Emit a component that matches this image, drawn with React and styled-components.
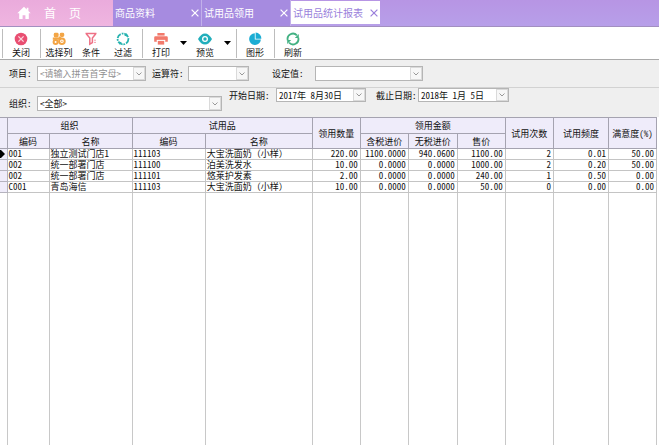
import React from "react";
import styled, { createGlobalStyle, css } from "styled-components";

const Global = createGlobalStyle`
  *, *::before, *::after { box-sizing: border-box; }
  body { margin: 0; background: #fff; }
  body, button, input, select {
    font-family: "Noto Sans CJK SC", "Liberation Sans", sans-serif;
    font-size: 9px;
    line-height: 11px;
    font-feature-settings: "hwid";
    color: #111;
  }
`;

const Page = styled.div`
  display: flex;
  flex-direction: column;
  min-height: 100vh;
  padding-right: 1px;
  overflow: hidden;
`;

/* ---------- tab strip ---------- */
const TabStrip = styled.nav`
  display: flex;
  height: 27px;
  background: linear-gradient(#b795e4, #b79fe9);
  border-bottom: 1px solid #a28fc0;
`;

const HomeTab = styled.button`
  display: flex;
  align-items: center;
  width: 113px;
  padding: 0 0 1px 17px;
  gap: 13px;
  border: 0;
  background: linear-gradient(#eaabdc, #efb5e0);
  color: #fff;
  font-size: 12px;
`;

const HomeLabel = styled.span`
  display: flex;
  gap: 13px;
`;

const Tab = styled.div`
  display: flex;
  align-items: center;
  justify-content: space-between;
  width: 89px;
  padding: 0 2px 1px;
  background: #a68be0;
  border-right: 1px solid #c2b0ea;
  color: #fff;
  ${(p) =>
    p.$active &&
    css`
      margin: 1px 0 2px;
      padding-bottom: 0;
      background: #fff;
      border-right: 0;
      color: #9a7fdb;
    `}
`;

const TabLabel = styled.button`
  padding: 0;
  border: 0;
  background: none;
  color: inherit;
  font-size: 10px;
  white-space: nowrap;
`;

const TabClose = styled.button`
  display: flex;
  padding: 0;
  border: 0;
  background: none;
  color: inherit;
`;

/* ---------- toolbar ---------- */
const Toolbar = styled.div`
  display: flex;
  align-items: center;
  height: 33px;
  border-bottom: 1px solid #a9a9a9;
  background: #fff;
`;

const Separator = styled.span`
  width: 1px;
  height: 29px;
  margin: 0 2px 0 3px;
  background: #bdbdbd;
  &:first-child { margin-left: 2px; }
`;

const ToolButton = styled.button`
  display: flex;
  flex-direction: column;
  align-items: center;
  gap: 1px;
  width: 32px;
  padding: 3px 0 0;
  border: 0;
  background: none;
  white-space: nowrap;
`;

const MenuButton = styled.button`
  display: flex;
  justify-content: center;
  width: 12px;
  padding: 0;
  border: 0;
  background: none;
`;

/* ---------- filters ---------- */
const FilterRow = styled.div`
  display: flex;
  align-items: flex-start;
  height: ${(p) => (p.$flush ? "29px" : "28px")};
  padding: ${(p) => (p.$flush ? "0" : "6px")} 0 0 9px;
  background: #efefef;
  border-bottom: ${(p) => (p.$flush ? "0" : "1px solid #d2d2d2")};
`;

const Field = styled.div`
  display: flex;
  align-items: center;
  margin-right: ${(p) => p.$after || "0"};
  margin-top: ${(p) => (p.$lowered ? "8px" : "0")};
`;

const Label = styled.label`
  width: ${(p) => p.$width};
  white-space: nowrap;
`;

const Box = styled.div`
  display: flex;
  position: relative;
  width: ${(p) => p.$width};
  height: ${(p) => p.$height || "15px"};
  border: 1px solid #b5b5b5;
  background: #fff;
`;

const controlText = css`
  flex: 1;
  min-width: 0;
  width: 100%;
  padding: 0 13px 0 2px;
  border: 0;
  border-radius: 0;
  outline: 0;
  background: transparent;
  appearance: none;
`;

const Select = styled.select`
  ${controlText}
  color: ${(p) => (p.$muted ? "#8f8f8f" : "#111")};
`;

const DateInput = styled.input`
  ${controlText}
`;

const Drop = styled.span`
  position: absolute;
  right: 0;
  top: 0;
  bottom: 0;
  width: 12px;
  display: flex;
  align-items: center;
  justify-content: center;
  border: 1px solid #dadada;
  background: #f7f7f7;
  pointer-events: none;
`;

/* ---------- report table ---------- */
const Report = styled.table`
  width: calc(100% - 2px);
  table-layout: fixed;
  border-collapse: collapse;
  border-top: 1px solid #a5a5ad;
`;

const HeadCell = styled.th`
  height: ${(p) => (p.$lower ? "15px" : "16px")};
  padding: 0;
  border: 1px solid #a5a3b0;
  background: #efecfa;
  font-weight: 400;
  white-space: nowrap;
`;

const Corner = styled(HeadCell)`
  border-left: 0;
`;

const Marker = styled.td`
  height: 11px;
  padding: 0;
  border: 1px solid #b5b3be;
  border-left: 0;
  background: #efecfa;
  line-height: 0;
`;

const Cell = styled.td`
  height: 11px;
  padding: 0 2px 0 1px;
  border: 1px solid #c4c4c4;
  line-height: 10px;
  text-align: ${(p) => (p.$num ? "right" : "left")};
  font-feature-settings: ${(p) => (p.$fullWidth ? "normal" : '"hwid"')};
  white-space: nowrap;
`;

const Blank = styled.td`
  height: calc(100vh - 192px);
  padding: 0;
  border: 1px solid #c8c8c8;
  border-bottom: 0;
  &:first-child { border-left: 0; }
`;

/* ---------- icons ---------- */
const Icon = ({ children, size = 14 }) => (
  <svg width={size} height={size} viewBox="0 0 14 14" fill="none" aria-hidden="true">
    {children}
  </svg>
);

const CloseIcon = () => (
  <Icon>
    <circle cx="7" cy="7" r="6.3" fill="#e94f72" />
    <path d="M4.4 4.4l5.2 5.2M9.6 4.4L4.4 9.6" stroke="#fbd5dd" strokeWidth="1.3" />
  </Icon>
);

const ColumnsIcon = () => (
  <Icon>
    <rect x="1.8" y=".8" width="4.8" height="4.6" rx="1.4" fill="#f3a545" />
    <rect x="7.8" y=".8" width="4.4" height="4.2" rx="1.4" fill="#f3a545" />
    <path d="M.8 6.6h7.4M7 5l2.4 2" stroke="#f3a545" strokeWidth="2.2" />
    <circle cx="3.6" cy="9.9" r="2" stroke="#f3a545" strokeWidth="2" />
    <circle cx="9.9" cy="9.3" r="2.8" stroke="#f3a545" strokeWidth="2" />
    <circle cx="9.9" cy="9.3" r=".8" fill="#f3a545" />
  </Icon>
);

const FunnelIcon = () => (
  <Icon>
    <path d="M1.5 1.6h11M2.4 2l3.4 4v6.2l2.6-1.6V6L11.6 2" stroke="#ee7186" strokeWidth="1.5" />
    <path d="M10 8.2h2M10 10.4h2" stroke="#f3a0ae" />
  </Icon>
);

const CycleIcon = () => (
  <Icon>
    <circle cx="7" cy="7" r="5.4" stroke="#28b3b0" strokeWidth="1.8" strokeDasharray="5 1.1 1.8 .8" />
    <path d="M10.6 1.2l.8 3.4-3.2-.8zM3.4 12.8l-.8-3.4 3.2.8z" fill="#28b3b0" />
  </Icon>
);

const PrintIcon = () => (
  <Icon>
    <path d="M3.4 1h7.2v2.6H3.4z" fill="#f27a6c" />
    <path d="M1.4 4.2h11.2q1.2 0 1.2 1.2v4.4h-2.6V8H2.8v1.8H.2V5.4q0-1.2 1.2-1.2z" fill="#f27a6c" />
    <path d="M3.8 8.8h6.4v3.8H3.8z" fill="#f27a6c" />
    <path d="M2.8 8.3h8.4" stroke="#fff" strokeWidth=".7" />
  </Icon>
);

const EyeIcon = () => (
  <Icon>
    <path d="M0 7Q3 1.4 7 1.4T14 7q-3 5.6-7 5.6T0 7z" fill="#21aebb" />
    <circle cx="7" cy="7" r="3" fill="#fff" />
    <circle cx="7" cy="7" r="1.7" fill="#21aebb" />
  </Icon>
);

const PieIcon = () => (
  <Icon>
    <path d="M6.8 1.2A5.9 5.9 0 1 0 12.9 7.6H6.8z" fill="#1badd4" />
    <path d="M7.6 .6A6 6 0 0 1 13.4 6.8H7.6z" fill="#1badd4" />
  </Icon>
);

const RefreshIcon = () => (
  <Icon>
    <path d="M1.7 8.2A5.4 5.4 0 0 1 10.9 3.3M12.3 5.8A5.4 5.4 0 0 1 3.1 10.7" stroke="#43b183" strokeWidth="1.8" />
    <path d="M12.8 2v4H8.8zM1.2 12V8h4z" fill="#43b183" />
  </Icon>
);

const HomeIcon = () => (
  <Icon>
    <path d="M7 .8L.3 7.2h1.9v5.9h3.4V9.2h2.8v3.9h3.4V7.2h1.9L11.4 5V1.8H9.7v1.6z" fill="#fff" />
  </Icon>
);

const CrossIcon = () => (
  <svg width="8" height="8" viewBox="0 0 8 8" aria-hidden="true">
    <path d="M.6.6l6.8 6.8M7.4.6L.6 7.4" stroke="currentColor" strokeWidth="1.2" />
  </svg>
);

const Triangle = () => (
  <svg width="7" height="4" viewBox="0 0 7 4" aria-hidden="true">
    <path d="M0 0h7L3.5 4z" fill="#000" />
  </svg>
);

const Chevron = () => (
  <Drop>
    <svg width="6" height="4" viewBox="0 0 6 4" fill="none" aria-hidden="true">
      <path d="M.5.5L3 3 5.5.5" stroke="#999" />
    </svg>
  </Drop>
);

const RowPointer = () => (
  <svg width="5" height="8" viewBox="0 0 5 8" aria-label="当前行">
    <path d="M0 0h1l4 4-4 4H0z" fill="#000" />
  </svg>
);

/* ---------- composed parts ---------- */
const Tool = ({ icon: Glyph, children }) => (
  <ToolButton type="button">
    <Glyph />
    <span>{children}</span>
  </ToolButton>
);

const Menu = ({ label }) => (
  <MenuButton type="button" aria-label={label}>
    <Triangle />
  </MenuButton>
);

const SelectField = ({ id, label, labelWidth, width, value = "", muted, after, lowered }) => (
  <Field $after={after} $lowered={lowered}>
    <Label htmlFor={id} $width={labelWidth}>{label}</Label>
    <Box $width={width}>
      <Select id={id} $muted={muted} defaultValue={value}>
        <option value={value}>{value}</option>
      </Select>
      <Chevron />
    </Box>
  </Field>
);

const DateField = ({ id, label, labelWidth, width, value, after }) => (
  <Field $after={after}>
    <Label htmlFor={id} $width={labelWidth}>{label}</Label>
    <Box $width={width} $height="14px">
      <DateInput id={id} type="text" defaultValue={value} />
      <Chevron />
    </Box>
  </Field>
);

const tabs = ["商品资料", "试用品领用", "试用品统计报表"];
const columns = [7, 42, 83, 73, 107, 48, 48, 49, 48, 48, 55, 48];
const rows = [
  ["001", "独立测试门店1", "111103", "大宝洗面奶（小样）", "220.00", "1100.0000", "940.0600", "1100.00", "2", "0.01", "50.00"],
  ["002", "统一部署门店", "111100", "泊美洗发水", "10.00", "0.0000", "0.0000", "1000.00", "2", "0.20", "50.00"],
  ["002", "统一部署门店", "111101", "悠莱护发素", "2.00", "0.0000", "0.0000", "240.00", "1", "0.50", "0.00"],
  ["C001", "青岛海信", "111103", "大宝洗面奶（小样）", "10.00", "0.0000", "0.0000", "50.00", "0", "0.00", "0.00"],
];

const Col = styled.col`
  width: ${(p) => p.$w}px;
`;

export default function App() {
  return (
    <Page>
      <Global />
      <TabStrip>
        <HomeTab type="button">
          <HomeIcon />
          <HomeLabel><span>首</span><span>页</span></HomeLabel>
        </HomeTab>
        {tabs.map((name, i) => (
          <Tab key={name} $active={i === 2}>
            <TabLabel type="button">{name}</TabLabel>
            <TabClose type="button" aria-label={"关闭" + name}><CrossIcon /></TabClose>
          </Tab>
        ))}
      </TabStrip>

      <Toolbar>
        <Separator />
        <Tool icon={CloseIcon}>关闭</Tool>
        <Separator />
        <Tool icon={ColumnsIcon}>选择列</Tool>
        <Tool icon={FunnelIcon}>条件</Tool>
        <Tool icon={CycleIcon}>过滤</Tool>
        <Separator />
        <Tool icon={PrintIcon}>打印</Tool>
        <Menu label="打印选项" />
        <Tool icon={EyeIcon}>预览</Tool>
        <Menu label="预览选项" />
        <Separator />
        <Tool icon={PieIcon}>图形</Tool>
        <Separator />
        <Tool icon={RefreshIcon}>刷新</Tool>
      </Toolbar>

      <FilterRow>
        <SelectField id="item" label="项目:" labelWidth="28px" width="109px" value="<请输入拼音首字母>" muted after="6px" />
        <SelectField id="operator" label="运算符:" labelWidth="36px" width="61px" after="23px" />
        <SelectField id="value" label="设定值:" labelWidth="43px" width="108px" />
      </FilterRow>
      <FilterRow $flush>
        <SelectField id="org" label="组织:" labelWidth="28px" width="185px" value="<全部>" lowered after="7px" />
        <DateField id="from" label="开始日期:" labelWidth="47px" width="90px" value="2017年 8月30日" after="10px" />
        <DateField id="to" label="截止日期:" labelWidth="42px" width="91px" value="2018年 1月 5日" />
      </FilterRow>

      <Report>
        <colgroup>
          {columns.map((w, i) => <Col key={i} $w={w} />)}
        </colgroup>
        <thead>
          <tr>
            <Corner rowSpan={2} aria-label="行标记" />
            <HeadCell colSpan={2}>组织</HeadCell>
            <HeadCell colSpan={2}>试用品</HeadCell>
            <HeadCell rowSpan={2}>领用数量</HeadCell>
            <HeadCell colSpan={3}>领用金额</HeadCell>
            <HeadCell rowSpan={2}>试用次数</HeadCell>
            <HeadCell rowSpan={2}>试用频度</HeadCell>
            <HeadCell rowSpan={2}>满意度(%)</HeadCell>
          </tr>
          <tr>
            {["编码", "名称", "编码", "名称", "含税进价", "无税进价", "售价"].map((t, i) => (
              <HeadCell key={i} $lower>{t}</HeadCell>
            ))}
          </tr>
        </thead>
        <tbody>
          {rows.map((row, r) => (
            <tr key={r}>
              <Marker>{r === 0 && <RowPointer />}</Marker>
              {row.map((v, c) => <Cell key={c} $num={c > 3} $fullWidth={c === 3}>{v}</Cell>)}
            </tr>
          ))}
          <tr>
            {columns.map((_, i) => <Blank key={i} />)}
          </tr>
        </tbody>
      </Report>
    </Page>
  );
}
